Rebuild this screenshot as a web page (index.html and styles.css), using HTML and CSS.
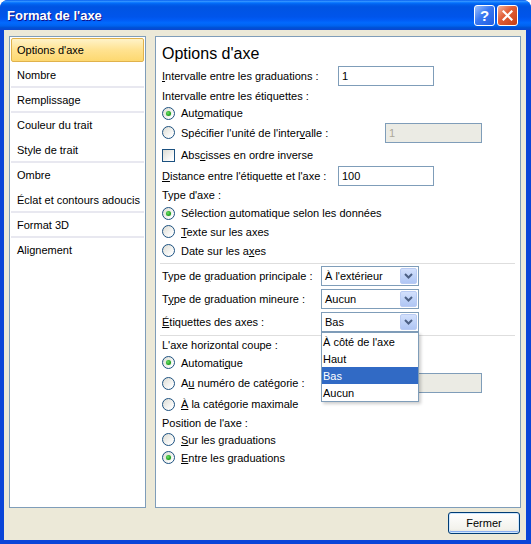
FILE: index.html
```html
<!DOCTYPE html>
<html lang="fr">
<head>
  <meta charset="UTF-8">
  <title>Format de l'axe</title>
  <link rel="stylesheet" href="styles.css">
</head>
<body>
  <div class="window">
    <div class="titlebar">
      <span class="title">Format de l'axe</span>
      <span class="tb-btn help">?</span>
      <span class="tb-btn close">
        <svg width="11" height="11" viewBox="0 0 11 11"><path d="M1.5 1.5 L9.5 9.5 M9.5 1.5 L1.5 9.5" stroke="#fff" stroke-width="2.2" stroke-linecap="square"/></svg>
      </span>
    </div>

    <div class="client">
      <div class="panes">
        <ul class="nav">
          <li class="item selected">Options d'axe</li>
          <li class="item sep">Nombre</li>
          <li class="item sep">Remplissage</li>
          <li class="item">Couleur du trait</li>
          <li class="item sep">Style de trait</li>
          <li class="item">Ombre</li>
          <li class="item sep">Éclat et contours adoucis</li>
          <li class="item sep">Format 3D</li>
          <li class="item">Alignement</li>
        </ul>

        <div class="content">
          <div class="heading">Options d'axe</div>

          <div class="row h20">
            <span class="label-fixed"><u>I</u>ntervalle entre les graduations :</span>
            <span class="field field-a">1</span>
          </div>
          <div class="row h19"><span>Intervalle entre les étiquettes :</span></div>
          <div class="row h16"><span class="radio on"></span><span>Aut<u>o</u>matique</span></div>
          <div class="row h23">
            <span class="radio"></span>
            <span class="label-grow">Spécifier l'unité de l'inter<u>v</u>alle :</span>
            <span class="field field-b disabled">1</span>
          </div>
          <div class="row h22"><span class="check"></span><span>Abs<u>c</u>isses en ordre inverse</span></div>
          <div class="row h20">
            <span class="label-fixed"><u>D</u>istance entre l'étiquette et l'axe :</span>
            <span class="field field-a">100</span>
          </div>
          <div class="row h18"><span>Type d'axe :</span></div>
          <div class="row h18"><span class="radio on"></span><span>Sélection <u>a</u>utomatique selon les données</span></div>
          <div class="row h19"><span class="radio"></span><span><u>T</u>exte sur les axes</span></div>
          <div class="row h19"><span class="radio"></span><span>Date sur les a<u>x</u>es</span></div>

          <div class="divider top3"></div>

          <div class="row h23">
            <span class="label-sel">Type de <u>g</u>raduation principale :</span>
            <span class="select"><span class="select-text">À l'extérieur</span><span class="select-btn"><svg width="9" height="6" viewBox="0 0 9 6"><path d="M1 1 L4.5 4.5 L8 1" fill="none" stroke="#4D6185" stroke-width="2"/></svg></span></span>
          </div>
          <div class="row h23">
            <span class="label-sel">T<u>y</u>pe de graduation mineure :</span>
            <span class="select"><span class="select-text">Aucun</span><span class="select-btn"><svg width="9" height="6" viewBox="0 0 9 6"><path d="M1 1 L4.5 4.5 L8 1" fill="none" stroke="#4D6185" stroke-width="2"/></svg></span></span>
          </div>
          <div class="row h23">
            <span class="label-sel"><u>É</u>tiquettes des axes :</span>
            <span class="select"><span class="select-text">Bas</span><span class="select-btn"><svg width="9" height="6" viewBox="0 0 9 6"><path d="M1 1 L4.5 4.5 L8 1" fill="none" stroke="#4D6185" stroke-width="2"/></svg></span></span>
          </div>

          <div class="divider top2"></div>

          <div class="row h17"><span>L'axe horizontal coupe :</span></div>
          <div class="row h19"><span class="radio on"></span><span>Automati<u>q</u>ue</span></div>
          <div class="row h22">
            <span class="radio"></span>
            <span class="label-grow">A<u>u</u> numéro de catégorie :</span>
            <span class="field field-b disabled"></span>
          </div>
          <div class="row h20"><span class="radio"></span><span><u>À</u> la catégorie maximale</span></div>
          <div class="row h17"><span>Position de l'axe :</span></div>
          <div class="row h17"><span class="radio"></span><span><u>S</u>ur les graduations</span></div>
          <div class="row h19"><span class="radio on"></span><span><u>E</u>ntre les graduations</span></div>

          <ul class="droplist">
            <li>À côté de l'axe</li>
            <li>Haut</li>
            <li class="current">Bas</li>
            <li>Aucun</li>
          </ul>
        </div>
      </div>

      <div class="footer">
        <button class="btn">Fermer</button>
      </div>
    </div>
  </div>
</body>
</html>
```

FILE: styles.css
```css
* {
  box-sizing: border-box;
}
body {
  margin: 0;
  font-family: "Liberation Sans", Arial, sans-serif;
  font-size: 11px;
  color: #000;
  background: #fff;
}
.window {
  width: 531px;
  height: 544px;
  display: flex;
  flex-direction: column;
  background: #0a45d8;
  border-radius: 8px 8px 0 0;
  overflow: hidden;
}
.titlebar {
  height: 30px;
  flex: none;
  display: flex;
  align-items: center;
  padding: 1px 13px 0 7px;
  background: linear-gradient(to bottom, #0058ee 0%, #3593ff 4%, #288eff 6%, #127dff 8%, #036ffc 10%, #0262ee 14%, #0057e5 20%, #0054e3 24%, #0055eb 56%, #005bf5 66%, #026afe 76%, #0062ef 86%, #0052d6 92%, #0846d2 100%);
}
.title {
  flex: 1;
  color: #fff;
  font-weight: bold;
  font-size: 13px;
  text-shadow: 1px 1px #0f1089;
}
.tb-btn {
  width: 21px;
  height: 21px;
  margin-left: 2px;
  border: 1px solid #fff;
  border-radius: 3px;
  display: flex;
  align-items: center;
  justify-content: center;
  color: #fff;
  font-weight: bold;
  font-size: 15px;
}
.help {
  background: linear-gradient(135deg, #9ec0fb, #3a78f2 45%, #1f5de2);
}
.close {
  background: linear-gradient(135deg, #f3b39b, #e2603a 40%, #c63d15);
}
.client {
  flex: 1;
  margin: 0 5px 4px 4px;
  padding: 6px 5px 0 5px;
  background: #ece9d8;
  display: flex;
  flex-direction: column;
}
.panes {
  height: 472px;
  display: flex;
  gap: 9px;
}

/* left navigation */
.nav {
  width: 137px;
  margin: 0;
  padding: 1px;
  list-style: none;
  background: #fff;
  border: 1px solid #7f9db9;
}
.item {
  height: 25px;
  padding-left: 6px;
  display: flex;
  align-items: center;
  border-bottom: 2px solid transparent;
}
.item.sep {
  border-bottom-color: #e8e8f0;
}
.item.selected {
  height: 24px;
  margin-bottom: 1px;
  padding-left: 5px;
  border: 1px solid #e0b24c;
  border-radius: 2px;
  background: linear-gradient(to bottom, #fff3c8, #ffe290 50%, #fdd870);
}

/* right panel */
.content {
  flex: 1;
  position: relative;
  padding: 0 6px;
  background: #fff;
  border: 1px solid #7f9db9;
}
.heading {
  height: 29px;
  padding-top: 7px;
  font-size: 16px;
  line-height: 19px;
}
.row {
  display: flex;
  align-items: center;
  white-space: nowrap;
}
.h16 { height: 16px; }
.h17 { height: 17px; }
.h18 { height: 18px; }
.h19 { height: 19px; }
.h20 { height: 20px; }
.h22 { height: 22px; }
.h23 { height: 23px; }

.label-fixed {
  width: 176px;
}
.label-grow {
  flex: 1;
}
.label-sel {
  width: 159px;
}
.field {
  height: 20px;
  padding: 0 3px;
  display: flex;
  align-items: center;
  background: #fff;
  border: 1px solid #7f9db9;
}
.field-a {
  width: 96px;
}
.field-b {
  width: 97px;
  margin-right: 32px;
}
.field.disabled {
  background: #ebebe4;
  color: #aca899;
}
.radio,
.check {
  width: 13px;
  height: 13px;
  margin-right: 6px;
  flex: none;
  border: 1px solid #1c5180;
  background: linear-gradient(135deg, #dcdcd4, #fff 85%);
  display: flex;
  align-items: center;
  justify-content: center;
}
.radio {
  border-radius: 50%;
}
.radio.on::after {
  content: "";
  width: 5px;
  height: 5px;
  border-radius: 50%;
  background: radial-gradient(circle at 40% 40%, #6ee36a, #21a121 60%, #1a861a);
  box-shadow: 0 0 1px #8fd98f;
}
.divider {
  height: 1px;
  margin-left: -2px;
  margin-right: -1px;
  background: #dedede;
}
.top3 { margin-top: 3px; }
.top2 { margin-top: 2px; }

.select {
  width: 98px;
  height: 20px;
  padding: 1px;
  display: flex;
  align-items: center;
  background: #fff;
  border: 1px solid #7f9db9;
}
.select-text {
  flex: 1;
  padding-left: 2px;
}
.select-btn {
  width: 17px;
  height: 100%;
  display: flex;
  align-items: center;
  justify-content: center;
  border: 1px solid #b9cbf3;
  border-radius: 2px;
  background: linear-gradient(to bottom, #d3e0fc, #bcd0f7 60%, #b0c6f4);
}

/* open list of the axis labels select */
.droplist {
  position: absolute;
  left: 165px;
  top: 295px;
  width: 98px;
  margin: 0;
  padding: 0;
  list-style: none;
  background: #fff;
  border: 1px solid #7f9db9;
  box-shadow: 2px 2px 3px rgba(0, 0, 0, 0.2);
}
.droplist li {
  height: 17px;
  padding-left: 1px;
  display: flex;
  align-items: center;
}
.droplist li.current {
  background: #316ac5;
  color: #fff;
}

.footer {
  display: flex;
  justify-content: flex-end;
  padding-top: 4px;
}
.btn {
  width: 72px;
  height: 22px;
  margin-right: 1px;
  font-family: inherit;
  font-size: 11px;
  color: #000;
  border: 1px solid #003c74;
  border-radius: 3px;
  background: linear-gradient(to bottom, #fff, #f3f2ec 80%, #e3e1d6);
  box-shadow: inset 0 0 0 1px #cee7ff, inset 0 -1px 0 1px #89adf0;
}
```
